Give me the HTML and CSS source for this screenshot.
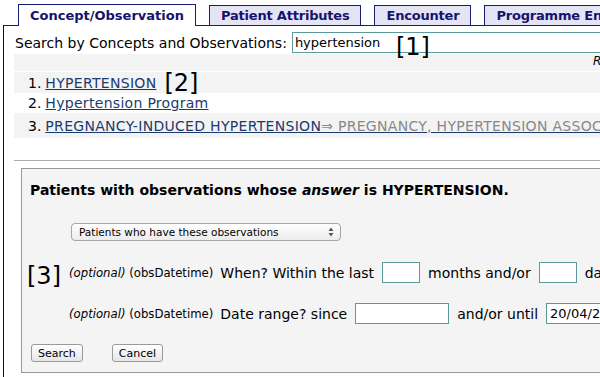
FILE: index.html
```html
<!DOCTYPE html>
<html>
<head>
<meta charset="utf-8">
<link rel="stylesheet" href="styles.css">
</head>
<body>
<div class="page">
  <div class="tabs">
    <div class="tab active">Concept/Observation</div>
    <div class="tab">Patient Attributes</div>
    <div class="tab">Encounter</div>
    <div class="tab">Programme Enrollment</div>
  </div>
  <div class="panel">
    <div class="search-row">
      <label class="search-label">Search by Concepts and Observations:</label>
      <div class="search-wrap">
        <input class="search-input" type="text" value="hypertension">
        <span class="anno anno1">[1]</span>
      </div>
    </div>
    <div class="results">
      <div class="results-head"><span class="results-info">Results 1 - 3 of 3</span></div>
      <div class="row shaded">1. <a href="#" class="rlink">HYPERTENSION</a> <span class="anno anno2">[2]</span></div>
      <div class="row">2. <a href="#" class="rlink">Hypertension Program</a></div>
      <div class="row shaded tall">3. <a href="#" class="rlink">PREGNANCY-INDUCED HYPERTENSION<span class="mapped">&rArr; PREGNANCY, HYPERTENSION ASSOCIATED</span></a></div>
    </div>
    <div class="divider"></div>
    <div class="box">
      <div class="box-title">Patients with observations whose <em>answer</em> is HYPERTENSION.</div>
      <div class="fake-select">
        <span>Patients who have these observations</span>
        <svg class="arrows" width="6" height="10" viewBox="0 0 6 10"><path d="M3 0.5 L5.5 4 L0.5 4 Z M3 9.5 L5.5 6 L0.5 6 Z" fill="#555"/></svg>
      </div>
      <div class="crit-row first">
        <span class="anno anno3">[3]</span>
        <span class="small"><em>(optional)</em> (obsDatetime)</span>
        <span>When? Within the last</span>
        <input class="field short" type="text">
        <span>months and/or</span>
        <input class="field short" type="text">
        <span>days</span>
      </div>
      <div class="crit-row">
        <span class="small"><em>(optional)</em> (obsDatetime)</span>
        <span>Date range? since</span>
        <input class="field mid" type="text">
        <span>and/or until</span>
        <input class="field mid" type="text" value="20/04/2010">
      </div>
      <div class="buttons">
        <button class="btn">Search</button>
        <button class="btn">Cancel</button>
      </div>
    </div>
  </div>
</div>
</body>
</html>
```
FILE: styles.css
```css
html, body {
  margin: 0;
  padding: 0;
  overflow: hidden;
  background: #fff;
}
body {
  font-family: "DejaVu Sans", Verdana, sans-serif;
  font-size: 14px;
  color: #000;
}
.page {
  width: 760px;
}
.tabs {
  display: flex;
  align-items: flex-end;
  gap: 13px;
  padding: 4px 0 0 18px;
}
.tab {
  box-sizing: border-box;
  height: 20px;
  line-height: 19px;
  padding: 0 11px;
  border: 1px solid #1a1a78;
  border-bottom: none;
  background: #e4e4f4;
  color: #14146e;
  font-weight: bold;
  font-size: 13px;
  letter-spacing: -0.2px;
  white-space: nowrap;
}
.tab.active {
  height: 22px;
  line-height: 21px;
  margin-bottom: -1px;
  background: #fff;
  letter-spacing: 0;
  position: relative;
  z-index: 1;
}
.panel {
  margin-left: 3px;
  border-top: 1px solid #1a1a78;
  border-left: 1px solid #111;
  padding-left: 10px;
  min-height: 400px;
}
.search-row {
  display: flex;
  align-items: center;
  gap: 5px;
  margin-top: 6px;
  padding-left: 1px;
}
.search-label {
  white-space: nowrap;
  font-size: 14px;
}
.search-wrap {
  position: relative;
}
.search-input {
  box-sizing: border-box;
  width: 420px;
  height: 21px;
  border: 1px solid #5c9a9a;
  padding: 0 2px;
  font-family: "DejaVu Sans", Verdana, sans-serif;
  font-size: 13px;
  color: #000;
  outline: none;
}
.anno {
  font-family: "DejaVu Sans", sans-serif;
  font-size: 24px;
  font-weight: normal;
  font-style: normal;
  letter-spacing: 0;
  color: #000;
  line-height: 24px;
}
.anno1 {
  position: absolute;
  left: 104px;
  top: 3px;
}
.anno2 {
  margin-left: 4px;
}
.results {
  margin-top: 1px;
  width: 680px;
  background: #f3f3f3;
}
.results-head {
  height: 17px;
  border-bottom: 1px solid #fff;
  font-style: italic;
  font-size: 12px;
  line-height: 15px;
  padding-left: 579px;
  white-space: nowrap;
  overflow: hidden;
}
.row {
  height: 20px;
  line-height: 20px;
  padding-left: 14px;
  white-space: nowrap;
  background: #fff;
  display: flex;
  align-items: center;
  gap: 4px;
  font-size: 14px;
}
.row.shaded {
  background: #f3f3f3;
  height: 21px;
}
.row.tall {
  height: 25px;
}
.rlink {
  color: #1c3a6c;
  text-decoration: underline;
  text-decoration-color: #1c3a6c;
  letter-spacing: 0.3px;
}
.mapped {
  color: #888;
  text-decoration: underline;
  text-decoration-color: #1c3a6c;
}
.divider {
  margin-top: 22px;
  height: 1px;
  background: #aaa;
  width: 700px;
}
.box {
  margin: 7px 0 0 7px;
  box-sizing: border-box;
  width: 700px;
  height: 205px;
  border: 1px solid #999;
  background: #f4f4f4;
  padding: 13px 8px 0 8px;
}
.box-title {
  font-weight: bold;
  font-size: 14px;
  line-height: 17px;
}
.box-title em {
  font-style: italic;
}
.fake-select {
  box-sizing: border-box;
  margin: 24px 0 0 41px;
  width: 270px;
  height: 18px;
  border: 1px solid #a6a6a6;
  border-radius: 4px;
  background: linear-gradient(#ffffff, #ececec);
  font-size: 10.5px;
  display: flex;
  align-items: center;
  justify-content: space-between;
  padding: 0 6px 0 7px;
}
.crit-row {
  position: relative;
  display: flex;
  align-items: center;
  gap: 8px;
  height: 21px;
  margin-top: 20px;
  padding-left: 39px;
  white-space: nowrap;
  font-size: 14px;
}
.crit-row.first {
  margin-top: 21px;
}
.anno3 {
  position: absolute;
  left: -3px;
  top: 2px;
}
.small {
  font-size: 11.7px;
  margin-right: -1px;
}
.field {
  box-sizing: border-box;
  height: 21px;
  border: 1px solid #5c9a9a;
  background: #fff;
  font-family: "DejaVu Sans", Verdana, sans-serif;
  font-size: 13px;
  padding: 0 3px;
  outline: none;
}
.field.short {
  width: 38px;
}
.field.mid {
  width: 94px;
}
.buttons {
  display: flex;
  gap: 29px;
  margin: 20px 0 0 1px;
}
.btn {
  box-sizing: border-box;
  height: 18px;
  padding: 0 6px;
  border: 1px solid #9a9a9a;
  border-radius: 3px;
  background: linear-gradient(#ffffff, #e6e6e6);
  font-family: "DejaVu Sans", Verdana, sans-serif;
  font-size: 11px;
  color: #000;
}
```
